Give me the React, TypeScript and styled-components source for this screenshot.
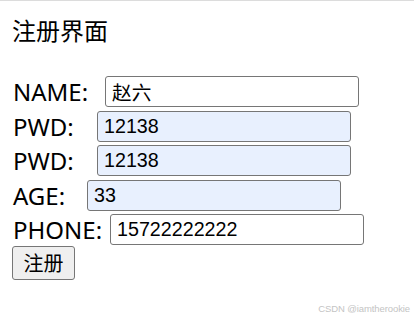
import React from 'react';
import styled, { createGlobalStyle } from 'styled-components';

const GlobalStyle = createGlobalStyle`
  html, body {
    margin: 0;
    padding: 0;
    background: #fff;
  }
  body {
    border-top: 1px solid #dcdcdc;
    font-family: "Noto Sans", "Noto Sans CJK SC", sans-serif;
    color: #000;
  }
`

const Page = styled.div`
  position: relative;
  width: 414px;
  height: 318px;
  padding: 0 0 0 12px;
  box-sizing: border-box;
`

const Title = styled.h3`
  margin: 0;
  padding-top: 13px;
  height: 62px;
  font-size: 24px;
  font-weight: normal;
  line-height: 32px;
  font-family: "Noto Sans CJK SC", sans-serif;
`

const Form = styled.form`
  display: flex;
  flex-direction: column;
  align-items: flex-start;
  gap: 3.5px;
`

const Row = styled.div`
  display: flex;
  align-items: center;
  height: 31px;
`

const Label = styled.label<{ $w: number }>`
  width: ${p => p.$w}px;
  font-size: 24px;
  line-height: 31px;
  padding-left: 1px;
  box-sizing: border-box;
  white-space: nowrap;
`

const Field = styled.input<{ $filled?: boolean }>`
  width: 254px;
  height: 31px;
  box-sizing: border-box;
  border: 1px solid #767676;
  border-radius: 3px;
  padding: 0 6px;
  font-family: "Liberation Sans", Arial, "Noto Sans CJK SC", sans-serif;
  font-size: 19.7px;
  color: #000;
  background: ${p => (p.$filled ? '#e8f0fe' : '#fff')};
  outline: none;
`

const Submit = styled.button`
  margin-top: -3px;
  width: 63px;
  height: 34px;
  box-sizing: border-box;
  border: 1px solid #767676;
  border-radius: 3px;
  background: #efefef;
  font-family: "Noto Sans CJK SC", sans-serif;
  font-size: 20px;
  color: #000;
  padding: 0;
`

const Watermark = styled.div`
  position: absolute;
  right: 4px;
  bottom: 5px;
  font-family: "Liberation Sans", Arial, sans-serif;
  font-size: 9.5px;
  letter-spacing: -0.1px;
  color: #c4c4c4;
`

const rows = [
  { label: 'NAME:', w: 93, value: '赵六', filled: false },
  { label: 'PWD:', w: 85, value: '12138', filled: true },
  { label: 'PWD:', w: 85, value: '12138', filled: true },
  { label: 'AGE:', w: 75, value: '33', filled: true },
  { label: 'PHONE:', w: 98, value: '15722222222', filled: false },
];

export default function App() {
  return (
    <Page>
      <GlobalStyle />
      <Title>注册界面</Title>
      <Form onSubmit={e => e.preventDefault()}>
        {rows.map((r, i) => (
          <Row key={i}>
            <Label $w={r.w}>{r.label}</Label>
            <Field $filled={r.filled} defaultValue={r.value} />
          </Row>
        ))}
        <Submit type="submit">注册</Submit>
      </Form>
      <Watermark>CSDN @iamtherookie</Watermark>
    </Page>
  );
}
